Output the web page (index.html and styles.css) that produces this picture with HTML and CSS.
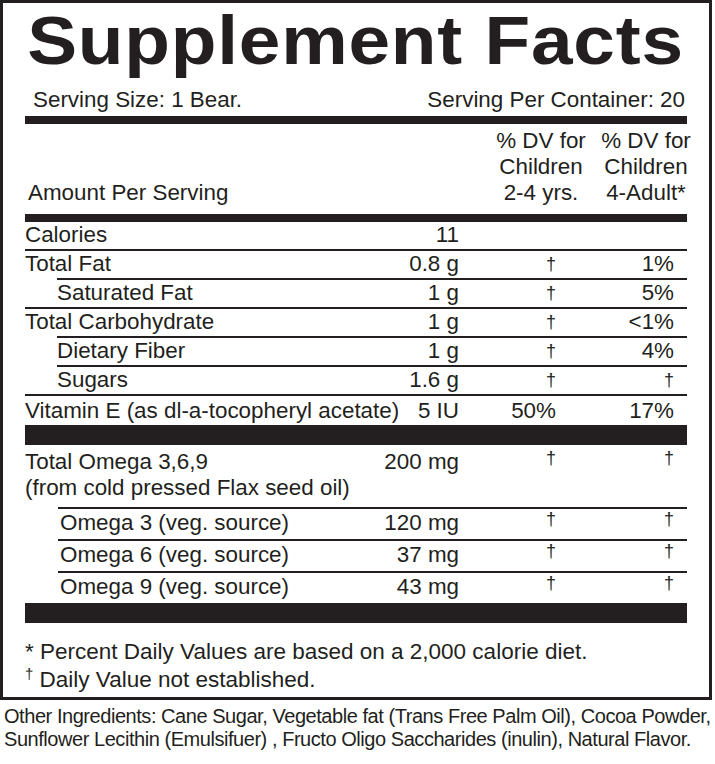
FILE: index.html
```html
<!DOCTYPE html>
<html lang="en">
<head>
    <meta charset="UTF-8">
    <meta name="viewport" content="width=device-width, initial-scale=1.0">
    <title>Supplement Facts</title>
    <link rel="stylesheet" href="styles.css">
</head>
<body>
    <div class="facts">
        <h1 class="title">Supplement Facts</h1>
        <div class="serving">
            <span>Serving Size: 1 Bear.</span>
            <span>Serving Per Container: 20</span>
        </div>

        <div class="head">
            <div class="head-amount">Amount Per Serving</div>
            <div class="head-dv">% DV for<br>Children<br>2-4 yrs.</div>
            <div class="head-dv head-dv-adult">% DV for<br>Children<br>4-Adult*</div>
        </div>

        <div class="row row-first">
            <span class="name">Calories</span><span class="amt">11</span><span class="dv"></span><span class="dv"></span>
        </div>
        <div class="row">
            <span class="name">Total Fat</span><span class="amt">0.8 g</span><span class="dv"><span class="dag">†</span></span><span class="dv">1%</span>
        </div>
        <div class="row row-sub">
            <span class="name">Saturated Fat</span><span class="amt">1 g</span><span class="dv"><span class="dag">†</span></span><span class="dv">5%</span>
        </div>
        <div class="row">
            <span class="name">Total Carbohydrate</span><span class="amt">1 g</span><span class="dv"><span class="dag">†</span></span><span class="dv">&lt;1%</span>
        </div>
        <div class="row row-sub">
            <span class="name">Dietary Fiber</span><span class="amt">1 g</span><span class="dv"><span class="dag">†</span></span><span class="dv">4%</span>
        </div>
        <div class="row row-sub">
            <span class="name">Sugars</span><span class="amt">1.6 g</span><span class="dv"><span class="dag">†</span></span><span class="dv"><span class="dag">†</span></span>
        </div>
        <div class="row row-vit">
            <span class="name">Vitamin E (as dl-a-tocopheryl acetate)</span><span class="amt">5 IU</span><span class="dv">50%</span><span class="dv">17%</span>
        </div>
        <div class="bar"></div>

        <div class="row omega-total">
            <span class="name">Total Omega 3,6,9<br>(from cold pressed Flax seed oil)</span><span class="amt">200 mg</span><span class="dv"><span class="dag dag-up">†</span></span><span class="dv"><span class="dag dag-up">†</span></span>
        </div>
        <div class="row omega-sub">
            <span class="name">Omega 3 (veg. source)</span><span class="amt">120 mg</span><span class="dv"><span class="dag dag-up">†</span></span><span class="dv"><span class="dag dag-up">†</span></span>
        </div>
        <div class="row omega-sub">
            <span class="name">Omega 6 (veg. source)</span><span class="amt">37 mg</span><span class="dv"><span class="dag dag-up">†</span></span><span class="dv"><span class="dag dag-up">†</span></span>
        </div>
        <div class="row omega-sub">
            <span class="name">Omega 9 (veg. source)</span><span class="amt">43 mg</span><span class="dv"><span class="dag dag-up">†</span></span><span class="dv"><span class="dag dag-up">†</span></span>
        </div>
        <div class="bar"></div>

        <div class="notes">
            <div>* Percent Daily Values are based on a 2,000 calorie diet.</div>
            <div><span class="note-dag">†</span> Daily Value not established.</div>
        </div>
    </div>

    <p class="ingredients">Other Ingredients: Cane Sugar, Vegetable fat (Trans Free Palm Oil), Cocoa Powder,<br>Sunflower Lecithin (Emulsifuer) , Fructo Oligo Saccharides (inulin), Natural Flavor.</p>
</body>
</html>
```

FILE: styles.css
```css
body {
    margin: 0;
    background-color: #fff;
    color: #231f20;
    font-family: "Liberation Sans", Arial, sans-serif;
    overflow: hidden;
}

.facts {
    width: 712px;
    box-sizing: border-box;
    border: 3px solid #231f20;
    padding: 2px 22px 0;
    font-size: 22.4px;
}

.title {
    width: fit-content;
    margin: 0;
    padding-left: 2px;
    font-size: 68px;
    line-height: 70px;
    font-weight: bold;
    letter-spacing: 0.7px;
    white-space: nowrap;
    transform: scaleX(1.1);
    transform-origin: left top;
}

.serving {
    display: flex;
    justify-content: space-between;
    margin-top: 12px;
    padding: 0 2px 3px 8px;
    line-height: 26px;
    border-bottom: 8px solid #231f20;
}

.head {
    display: flex;
    align-items: flex-end;
    padding: 4px 0 8px;
    line-height: 26px;
    border-bottom: 8px solid #231f20;
}

.head-amount {
    flex: 1;
    padding-left: 3px;
}

.head-dv {
    width: 96px;
    text-align: center;
    white-space: nowrap;
}

.head-dv-adult {
    width: 90px;
    margin-left: 12px;
    margin-right: -4px;
}

.row {
    display: grid;
    grid-template-columns: minmax(0, 1fr) 110px 97px 118px 13px;
    line-height: 25px;
    padding-bottom: 2px;
    border-top: 2px solid #231f20;
    white-space: nowrap;
}

.row-first {
    border-top: 0;
}

.row-sub {
    margin-left: 32px;
}

.amt,
.dv {
    text-align: right;
}

.dag {
    font-size: 18px;
    line-height: 0;
    vertical-align: 1px;
}

.dag-up {
    vertical-align: 5px;
}

.row-vit {
    line-height: 29px;
    padding-bottom: 0;
}

.bar {
    height: 20px;
    background-color: #231f20;
}

.omega-total {
    border-top: 0;
    line-height: 26px;
    padding: 4px 0 6px;
}

.omega-sub {
    margin-left: 33px;
    padding: 0 0 3px 2px;
    line-height: 27px;
}

.notes {
    padding: 15px 0 3px;
    font-size: 22.5px;
    line-height: 28px;
}

.note-dag {
    font-size: 15px;
    line-height: 0;
    vertical-align: 8px;
}

.ingredients {
    margin: 5px 0 0 4px;
    font-size: 20px;
    line-height: 23.3px;
    letter-spacing: -0.45px;
    white-space: nowrap;
}
```
